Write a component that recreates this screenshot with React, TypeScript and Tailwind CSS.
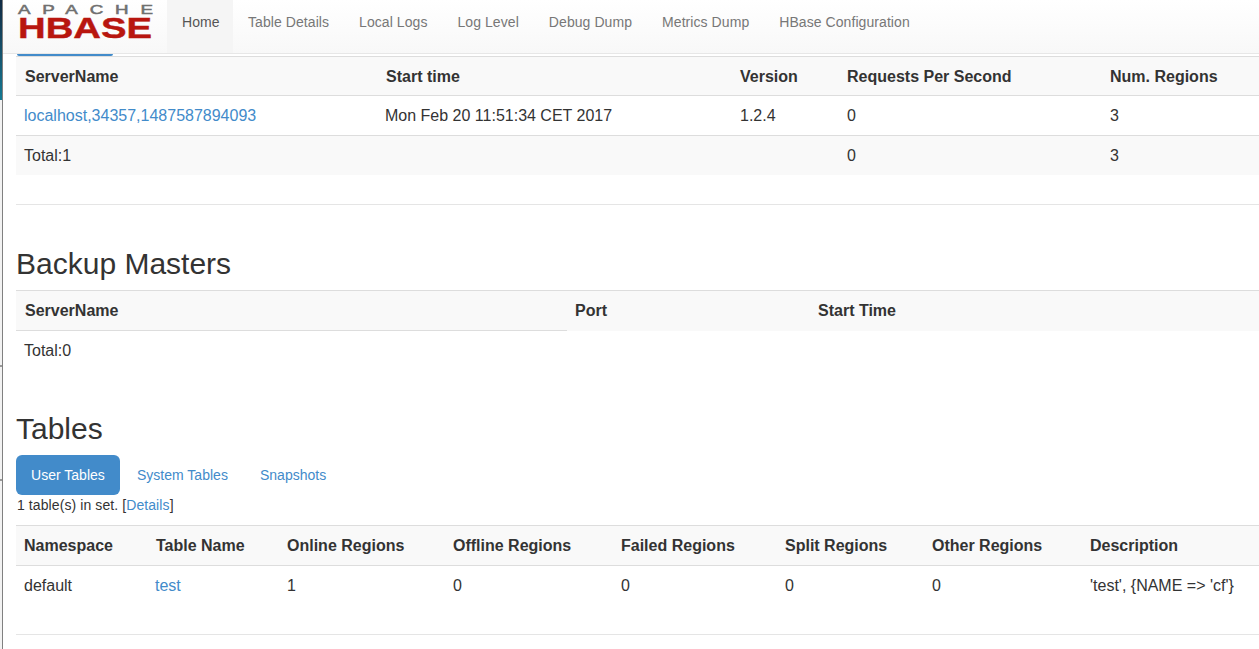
const navItems = ["Home", "Table Details", "Local Logs", "Log Level", "Debug Dump", "Metrics Dump", "HBase Configuration"];

function Logo() {
  return (
    <svg width="167" height="53" viewBox="0 0 167 53" className="block">
      <text
        transform="translate(18 14) scale(1.5 1)"
        textLength="90"
        lengthAdjust="spacing"
        fontFamily="Liberation Sans"
        fontSize="12.5"
        fill="#707070"
        stroke="#707070"
        strokeWidth="0.5"
      >
        APACHE
      </text>
      <text
        x="18"
        y="38"
        textLength="134"
        lengthAdjust="spacingAndGlyphs"
        fontFamily="Liberation Sans"
        fontWeight="700"
        fontSize="29"
        fill="#b8160f"
        stroke="#b8160f"
        strokeWidth="0.4"
      >
        HBASE
      </text>
    </svg>
  );
}

export default function App() {
  return (
    <div className="flex h-[649px] overflow-hidden bg-white font-['Liberation_Sans',Arial,sans-serif] text-[14px] leading-[20px] text-[#333]">
      {/* window edge behind the browser */}
      <div className="flex w-[3px] shrink-0 flex-col border-r border-[#808080]">
        <div className="h-[100px] bg-gradient-to-b from-[#102a43] to-[#137a94]" />
        <div className="h-[265px] bg-[#f2f2f2]" />
        <div className="h-[2px] bg-[#999]" />
        <div className="h-[112px] bg-[#f2f2f2]" />
        <div className="h-[2px] bg-[#999]" />
        <div className="flex-1 bg-[#f2f2f2]" />
      </div>

      <div className="min-w-0 flex-1">
        <header className="flex h-[54px] border-b border-[#e7e7e7] bg-gradient-to-b from-white to-[#f8f8f8]">
          <div className="-ml-[3px] w-[167px] shrink-0">
            <Logo />
          </div>
          <nav className="flex tracking-[0.07px]">
            {navItems.map((item, i) => (
              <a
                key={item}
                className={i === 0 ? "w-[66px] bg-[#f5f5f5] px-[15px] py-[12px] text-[#555]" : "px-[15px] py-[12px] text-[#777]"}
              >
                {item}
              </a>
            ))}
          </nav>
        </header>

        <div className="pl-[13px]">
          <div className="ml-[1px] h-[2px] w-[96px] rounded-b-[4px] bg-[#428bca]" />

          <table className="w-full table-fixed text-[16px] leading-[22.86px]">
            <colgroup>
              <col className="w-[362px]" />
              <col className="w-[354px]" />
              <col className="w-[107px]" />
              <col className="w-[263px]" />
              <col />
            </colgroup>
            <tbody>
              <tr className="bg-[#f9f9f9] text-left">
                <th className="border-t border-[#ddd] pt-[9px] pr-2 pb-[6px] pl-[9px]">ServerName</th>
                <th className="border-t border-[#ddd] pt-[9px] pr-2 pb-[6px] pl-2">Start time</th>
                <th className="border-t border-[#ddd] pt-[9px] pr-2 pb-[6px] pl-2">Version</th>
                <th className="border-t border-[#ddd] pt-[9px] pr-2 pb-[6px] pl-2">Requests Per Second</th>
                <th className="border-t border-[#ddd] pt-[9px] pr-2 pb-[6px] pl-2">Num. Regions</th>
              </tr>
              <tr>
                <td className="border-t border-[#ddd] pt-[9px] pr-2 pb-[7px] pl-2">
                  <a className="text-[#428bca]">localhost,34357,1487587894093</a>
                </td>
                <td className="border-t border-[#ddd] pt-[9px] pr-2 pb-[7px] pl-[7px]">Mon Feb 20 11:51:34 CET 2017</td>
                <td className="border-t border-[#ddd] pt-[9px] pr-2 pb-[7px] pl-2">1.2.4</td>
                <td className="border-t border-[#ddd] pt-[9px] pr-2 pb-[7px] pl-2">0</td>
                <td className="border-t border-[#ddd] pt-[9px] pr-2 pb-[7px] pl-2">3</td>
              </tr>
              <tr className="bg-[#f9f9f9]">
                <td className="border-t border-[#ddd] pt-[9px] pr-2 pb-[7px] pl-2">Total:1</td>
                <td className="border-t border-[#ddd] pt-[9px] pr-2 pb-[7px] pl-2" />
                <td className="border-t border-[#ddd] pt-[9px] pr-2 pb-[7px] pl-2" />
                <td className="border-t border-[#ddd] pt-[9px] pr-2 pb-[7px] pl-2">0</td>
                <td className="border-t border-[#ddd] pt-[9px] pr-2 pb-[7px] pl-2">3</td>
              </tr>
            </tbody>
          </table>

          <hr className="mt-[29px] border-t border-[#e5e5e5]" />

          <h2 className="mt-[42px] mb-[10px] text-[30px] leading-[33px] font-normal">Backup Masters</h2>
          <table className="w-full table-fixed text-[16px] leading-[22.86px]">
            <colgroup>
              <col className="w-[551px]" />
              <col className="w-[243px]" />
              <col />
            </colgroup>
            <tbody>
              <tr className="bg-[#f9f9f9] text-left">
                <th className="border-t border-[#ddd] pt-[9px] pr-2 pb-[8px] pl-[9px]">ServerName</th>
                <th className="border-t border-[#ddd] pt-[9px] pr-2 pb-[8px] pl-2">Port</th>
                <th className="border-t border-[#ddd] pt-[9px] pr-2 pb-[8px] pl-2">Start Time</th>
              </tr>
              <tr>
                <td className="border-t border-[#ddd] pt-[9px] pr-2 pb-[7px] pl-2">Total:0</td>
                <td className="p-2" />
                <td className="p-2" />
              </tr>
            </tbody>
          </table>

          <h2 className="mt-[42px] mb-[10px] text-[30px] leading-[33px] font-normal">Tables</h2>
          <div className="flex gap-[2px] tracking-[0.02px]">
            <a className="rounded-[6px] bg-[#428bca] px-[15px] py-[10px] text-white">User Tables</a>
            <a className="px-[15px] py-[10px] text-[#428bca]">System Tables</a>
            <a className="px-[15px] py-[10px] text-[#428bca]">Snapshots</a>
          </div>
          <p className="mb-[10px] pl-[1px] tracking-[0.09px]">
            1 table(s) in set. [<a className="text-[#428bca]">Details</a>]
          </p>

          <table className="w-full table-fixed text-[16px] leading-[22.86px]">
            <colgroup>
              <col className="w-[132px]" />
              <col className="w-[131px]" />
              <col className="w-[166px]" />
              <col className="w-[168px]" />
              <col className="w-[164px]" />
              <col className="w-[147px]" />
              <col className="w-[158px]" />
              <col />
            </colgroup>
            <tbody>
              <tr className="bg-[#f9f9f9] text-left">
                {["Namespace", "Table Name", "Online Regions", "Offline Regions", "Failed Regions", "Split Regions", "Other Regions", "Description"].map((h) => (
                  <th key={h} className="border-t border-[#ddd] pt-[9px] pr-2 pb-[7px] pl-2">
                    {h}
                  </th>
                ))}
              </tr>
              <tr>
                <td className="border-t border-[#ddd] pt-[9px] pr-2 pb-[7px] pl-2">default</td>
                <td className="border-t border-[#ddd] pt-[9px] pr-2 pb-[7px] pl-[7px]">
                  <a className="text-[#428bca]">test</a>
                </td>
                <td className="border-t border-[#ddd] pt-[9px] pr-2 pb-[7px] pl-2">1</td>
                <td className="border-t border-[#ddd] pt-[9px] pr-2 pb-[7px] pl-2">0</td>
                <td className="border-t border-[#ddd] pt-[9px] pr-2 pb-[7px] pl-2">0</td>
                <td className="border-t border-[#ddd] pt-[9px] pr-2 pb-[7px] pl-2">0</td>
                <td className="border-t border-[#ddd] pt-[9px] pr-2 pb-[7px] pl-2">0</td>
                <td className="border-t border-[#ddd] pt-[9px] pr-2 pb-[7px] pl-2 whitespace-nowrap">'test', {"{NAME => 'cf'}"}</td>
              </tr>
            </tbody>
          </table>

          <hr className="mt-[29px] border-t border-[#e5e5e5]" />
        </div>
      </div>
    </div>
  );
}
